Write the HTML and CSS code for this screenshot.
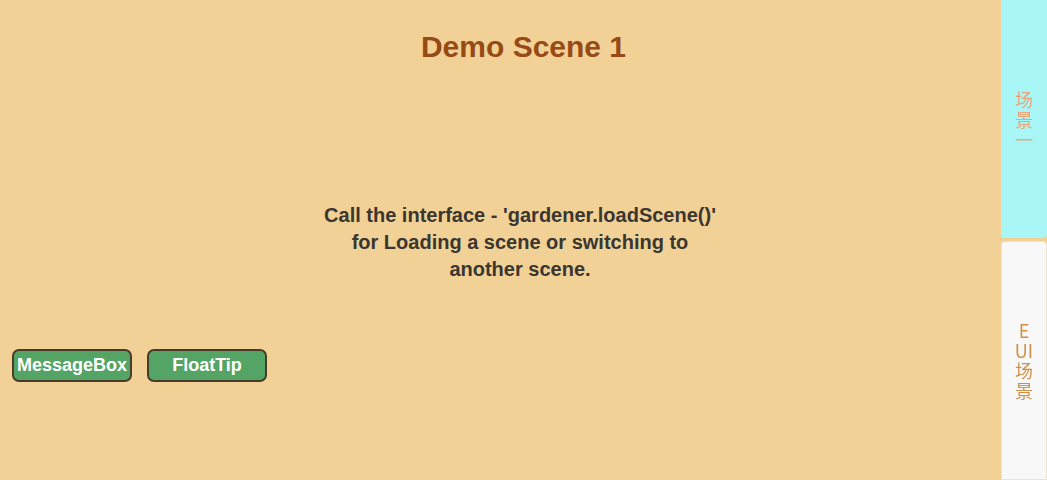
FILE: index.html
```html
<!DOCTYPE html>
<html lang="en">
<head>
<meta charset="utf-8">
<title>Demo Scene 1</title>
<link rel="stylesheet" href="styles.css">
</head>
<body>
<main class="scene">
  <h1 class="title">Demo Scene 1</h1>
  <p class="desc">Call the interface - 'gardener.loadScene()' for Loading a scene or switching to another scene.</p>
  <div class="actions">
    <button class="btn">MessageBox</button>
    <button class="btn">FloatTip</button>
  </div>
</main>
<nav class="tabs">
  <div class="tab tab-active"><span class="tab-label">场景一</span></div>
  <div class="tab tab-idle"><span class="tab-label">EUI场景</span></div>
</nav>
</body>
</html>
```
FILE: styles.css
```css
html, body {
  margin: 0;
  padding: 0;
  height: 100%;
}
body {
  background: #f2d197;
  font-family: "Liberation Sans", Arial, sans-serif;
  overflow: hidden;
}
.scene {
  display: flex;
  flex-direction: column;
  align-items: center;
  height: 480px;
}
.title {
  margin: 29px 0 0;
  font-size: 30px;
  line-height: 36px;
  font-weight: bold;
  color: #964a16;
}
.desc {
  margin: 137px 7px 0 0;
  width: 410px;
  text-align: center;
  font-size: 20px;
  line-height: 27px;
  font-weight: bold;
  color: #3b3630;
}
.actions {
  align-self: flex-start;
  display: flex;
  gap: 15px;
  margin: 66px 0 0 12px;
}
.btn {
  width: 120px;
  height: 33px;
  padding: 0;
  background: #54a465;
  border: 2px solid #4a3a2c;
  border-radius: 7px;
  color: #fff;
  font-family: "Liberation Sans", Arial, sans-serif;
  font-size: 18px;
  font-weight: bold;
}
.tabs {
  position: fixed;
  top: 0;
  right: 0;
  width: 46px;
  height: 480px;
  display: flex;
  flex-direction: column;
  gap: 3px;
}
.tab {
  flex: 1;
  display: flex;
  align-items: center;
  justify-content: center;
  box-sizing: border-box;
}
.tab-active {
  background: #a8f6f6;
  border-radius: 0 0 4px 4px;
  color: #e6a57c;
}
.tab-idle {
  background: #f7f8f7;
  border: 1px solid #ece4d2;
  border-radius: 4px 4px 0 0;
  color: #cf9148;
}
.tab-label {
  width: 20px;
  font-family: "Noto Sans CJK SC", sans-serif;
  font-size: 18px;
  line-height: 20px;
  text-align: center;
  word-break: break-all;
}
```
